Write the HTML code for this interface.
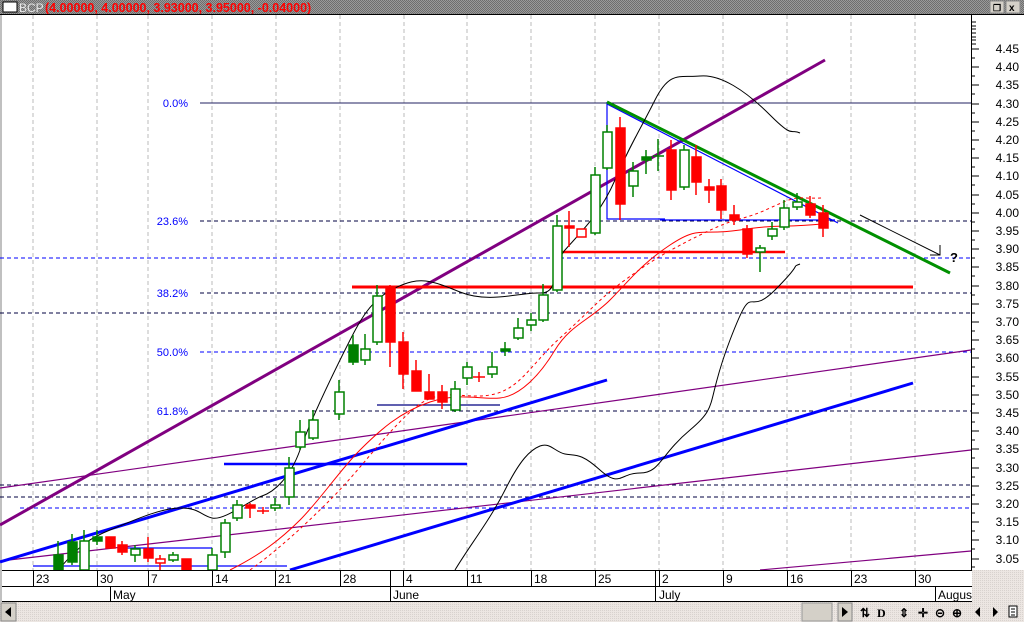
<!DOCTYPE html>
<html><head><meta charset="utf-8"><style>
html,body{margin:0;padding:0;width:1024px;height:622px;overflow:hidden;background:#fff;font-family:"Liberation Sans",sans-serif}
svg{display:block}
</style></head><body>
<svg width="1024" height="622" viewBox="0 0 1024 622" xmlns="http://www.w3.org/2000/svg" font-family="Liberation Sans, sans-serif">
<defs>
<pattern id="chk" width="2" height="2" patternUnits="userSpaceOnUse"><rect width="2" height="2" fill="#9a9a9a"/><rect width="1" height="1" fill="#6e6e6e"/><rect x="1" y="1" width="1" height="1" fill="#6e6e6e"/></pattern>
<pattern id="lt" width="2" height="2" patternUnits="userSpaceOnUse"><rect width="2" height="2" fill="#ece6e2"/><rect width="1" height="1" fill="#d8d2ce"/></pattern>
</defs>
<!-- top bar -->
<rect x="0" y="0" width="1024" height="14" fill="url(#chk)"/>
<rect x="3" y="2" width="14" height="10" fill="#fff" stroke="#000"/>
<text x="19" y="12" font-size="12" fill="#e8e8e8">BCP</text>
<text x="45" y="12" font-size="12.5" fill="#ff0000" font-weight="bold">(4.00000, 4.00000, 3.93000, 3.95000, -0.04000)</text>
<rect x="990" y="1" width="14" height="12" fill="#d4d0c8" stroke="#888"/><text x="993" y="11" font-size="9" font-weight="bold">&#x2750;</text>
<rect x="1006" y="1" width="14" height="12" fill="#d4d0c8" stroke="#888"/><text x="1009" y="11" font-size="10" font-weight="bold">x</text>
<line x1="0" y1="14.5" x2="1024" y2="14.5" stroke="#000"/>
<rect x="0" y="15" width="2" height="587" fill="#c0c0c0"/>
<!-- grid vertical -->
<g stroke="#bbb" stroke-dasharray="4,3">
<path d="M33 15V570M97 15V570M148 15V570M212 15V570M276 15V570M340 15V570M404 15V570M467 15V570M531 15V570M595 15V570M659 15V570M723 15V570M787 15V570M851 15V570M915 15V570"/>
</g>
<!-- fib / horizontal dashed -->
<line x1="200" y1="103" x2="971" y2="103" stroke="#202060" stroke-width="1"/>
<g stroke-dasharray="4,3" stroke-width="1">
<line x1="200" y1="221" x2="971" y2="221" stroke="#000040"/>
<line x1="0" y1="258" x2="971" y2="258" stroke="#0000ff"/>
<line x1="200" y1="293" x2="971" y2="293" stroke="#000040"/>
<line x1="0" y1="313" x2="971" y2="313" stroke="#000040"/>
<line x1="200" y1="352" x2="971" y2="352" stroke="#0000ff"/>
<line x1="200" y1="411" x2="971" y2="411" stroke="#000040"/>
<line x1="0" y1="485" x2="971" y2="485" stroke="#000040"/>
<line x1="0" y1="497" x2="971" y2="497" stroke="#000040"/>
<line x1="20" y1="508" x2="971" y2="508" stroke="#0000ff"/>
</g>
<g font-size="11" fill="#0000ff" text-anchor="end">
<text x="188" y="107">0.0%</text><text x="188" y="225">23.6%</text><text x="188" y="297">38.2%</text><text x="188" y="356">50.0%</text><text x="188" y="415">61.8%</text>
</g>
<!-- trend lines -->
<g fill="none">
<line x1="0" y1="488" x2="971" y2="350" stroke="#800080" stroke-width="1.2"/>
<line x1="0" y1="561" x2="971" y2="450" stroke="#800080" stroke-width="1.2"/>
<line x1="760" y1="570" x2="971" y2="551" stroke="#800080" stroke-width="1.2"/>
<line x1="0" y1="525" x2="825" y2="60" stroke="#800080" stroke-width="3"/>
<line x1="0" y1="562" x2="607" y2="380" stroke="#0000ff" stroke-width="3"/>
<line x1="290" y1="570" x2="913" y2="383" stroke="#0000ff" stroke-width="3"/>
<line x1="224" y1="464" x2="467" y2="464" stroke="#0000ff" stroke-width="2.5"/>
<line x1="33" y1="566" x2="287" y2="566" stroke="#0000ff" stroke-width="1.2"/>
<line x1="120" y1="548" x2="212" y2="548" stroke="#0000ff" stroke-width="1.2"/>
<line x1="377" y1="405" x2="500" y2="405" stroke="#000080" stroke-width="1.2"/>
<line x1="352" y1="287" x2="913" y2="287" stroke="#ff0000" stroke-width="3"/>
<line x1="555" y1="252" x2="785" y2="252" stroke="#ff0000" stroke-width="2.5"/>
<path d="M607 102V219H665M660 220H835" stroke="#0000ff" stroke-width="1.2"/>
<line x1="607" y1="104" x2="838" y2="223" stroke="#0000ff" stroke-width="1.2"/>
<line x1="607" y1="102" x2="950" y2="273" stroke="#009000" stroke-width="3"/>
<path d="M860 215L940 255M940 245V255H930" stroke="#000" stroke-width="1"/>
<!-- bands -->
<path d="M60 568C80 545 90 538 110 530S160 508 180 508 200 515 212 518 250 500 262 496 290 478 300 450 330 380 345 350 370 300 395 288 430 280 460 292 520 292 540 293 552 265 565 250 600 215 615 180 640 130 655 100 680 78 700 76 745 90 770 115 790 128 800 133 822 133" stroke="#000" stroke-width="1"/>
<path d="M455 570C470 545 490 520 505 490S530 450 540 446 555 452 565 454 580 452 600 470 620 473 640 473 660 455 690 430 705 405 730 340 745 320 775 290 790 268 800 264 822 264" stroke="#000" stroke-width="1"/>
<path d="M230 570C260 555 280 540 300 520S340 470 360 450 400 412 430 402 480 400 500 398 540 375 555 350 590 320 610 300 640 265 670 245 700 236 740 230 780 228 822 224" stroke="#ff0000" stroke-width="1"/>
<path d="M250 570C275 552 300 530 330 500S380 440 410 412 460 400 490 395 530 365 560 338 600 298 625 280 660 255 700 235 740 222 770 208 795 199 822 198" stroke="#ff0000" stroke-width="1" stroke-dasharray="3,3"/>
</g>
<!-- candles -->
<g stroke-width="1.5">
<g stroke="#008000">
<path d="M58 541V570M72 534V565M84 530V570M97 530V545M135 545V562M173 552V562M212 548V570M225 519V558M237 500V521M275 498V511M289 457V505M300 420V450M313 410V440M339 380V420M353 335V365M365 334V365M377 285V345M455 381V412M467 362V385M492 352V378M505 342V356M518 318V340M531 313V331M543 284V322M557 215V292M595 167V235M607 125V170M633 162V197M646 150V174M658 139V171M684 145V190M760 245V272M772 222V240M784 200V230M797 193V210"/>
<path d="M653 156H664" />
</g>
<g fill="#fff" stroke="#008000">
<rect x="80" y="541" width="9" height="29"/><rect x="131" y="549" width="9" height="6"/><rect x="169" y="555" width="9" height="5"/><rect x="208" y="555" width="9" height="15"/><rect x="221" y="523" width="9" height="29"/><rect x="233" y="505" width="9" height="13"/><rect x="271" y="505" width="9" height="3"/><rect x="285" y="468" width="9" height="29"/><rect x="296" y="432" width="9" height="15"/><rect x="309" y="420" width="9" height="18"/><rect x="335" y="392" width="9" height="22"/><rect x="361" y="349" width="9" height="11"/><rect x="373" y="296" width="9" height="46"/><rect x="451" y="389" width="9" height="21"/><rect x="463" y="367" width="9" height="11"/><rect x="488" y="367" width="9" height="7"/><rect x="514" y="328" width="9" height="10"/><rect x="527" y="320" width="9" height="5"/><rect x="539" y="295" width="9" height="25"/><rect x="553" y="226" width="9" height="64"/><rect x="591" y="175" width="9" height="58"/><rect x="603" y="132" width="9" height="36"/><rect x="629" y="171" width="9" height="15"/><rect x="680" y="150" width="9" height="37"/><rect x="756" y="248" width="9" height="4"/><rect x="768" y="229" width="9" height="7"/><rect x="780" y="208" width="9" height="19"/><rect x="793" y="202" width="9" height="5"/>
</g>
<g fill="#008000" stroke="#008000">
<rect x="54" y="555" width="9" height="15"/><rect x="68" y="542" width="9" height="20"/><rect x="93" y="537" width="9" height="4"/><rect x="349" y="345" width="9" height="17"/><rect x="501" y="349" width="9" height="2"/><rect x="642" y="157" width="9" height="3"/>
</g>
<g stroke="#ff0000">
<path d="M122 541V555M148 537V562M160 555V570M250 503V518M263 507V514M257 511H269M390 285V367M403 332V389M416 360V391M429 374V399M442 385V409M479 372V382M473 377H485M569 211V247M620 117V220M671 140V200M696 145V195M709 179V203M721 179V219M734 205V225M747 225V258M810 196V218M823 205V237"/>
</g>
<g fill="#ff0000" stroke="#ff0000">
<rect x="106" y="537" width="9" height="11"/><rect x="118" y="545" width="9" height="7"/><rect x="144" y="549" width="9" height="9"/><rect x="182" y="559" width="9" height="11"/><rect x="246" y="505" width="9" height="3"/><rect x="386" y="288" width="9" height="54"/><rect x="399" y="342" width="9" height="32"/><rect x="412" y="371" width="9" height="20"/><rect x="425" y="392" width="9" height="7"/><rect x="438" y="392" width="9" height="10"/><rect x="565" y="226" width="9" height="2"/><rect x="616" y="128" width="9" height="76"/><rect x="667" y="150" width="9" height="40"/><rect x="692" y="157" width="9" height="25"/><rect x="705" y="187" width="9" height="3"/><rect x="717" y="186" width="9" height="24"/><rect x="730" y="215" width="9" height="5"/><rect x="743" y="229" width="9" height="25"/><rect x="806" y="204" width="9" height="11"/><rect x="819" y="213" width="9" height="15"/>
</g>
<g fill="#fff" stroke="#ff0000"><rect x="156" y="559" width="9" height="4"/><rect x="577" y="229" width="9" height="8"/></g>
</g>
<text x="950" y="262" font-size="13" font-weight="bold">?</text>
<!-- right axis -->
<rect x="972" y="15" width="52" height="555" fill="#fff"/>
<line x1="971.5" y1="15" x2="971.5" y2="570" stroke="#000"/>
<g stroke="#000">
<path d="M971 22h5M971 26h5M971 29h5M971 33h5M971 37h5M971 40h5M971 44h5M971 29h5"/>
</g>
<g font-size="12" text-anchor="end" fill="#000">
<text x="1019" y="53">4.45</text><text x="1019" y="71">4.40</text><text x="1019" y="89">4.35</text><text x="1019" y="108">4.30</text><text x="1019" y="126">4.25</text><text x="1019" y="144">4.20</text><text x="1019" y="162">4.15</text><text x="1019" y="180">4.10</text><text x="1019" y="199">4.05</text><text x="1019" y="217">4.00</text><text x="1019" y="235">3.95</text><text x="1019" y="253">3.90</text><text x="1019" y="271">3.85</text><text x="1019" y="290">3.80</text><text x="1019" y="308">3.75</text><text x="1019" y="326">3.70</text><text x="1019" y="344">3.65</text><text x="1019" y="362">3.60</text><text x="1019" y="381">3.55</text><text x="1019" y="399">3.50</text><text x="1019" y="417">3.45</text><text x="1019" y="435">3.40</text><text x="1019" y="453">3.35</text><text x="1019" y="472">3.30</text><text x="1019" y="490">3.25</text><text x="1019" y="508">3.20</text><text x="1019" y="526">3.15</text><text x="1019" y="544">3.10</text><text x="1019" y="563">3.05</text>
</g>
<path stroke="#000" d="M971 49h8M971 67h8M971 85h8M971 104h8M971 122h8M971 140h8M971 158h8M971 176h8M971 195h8M971 213h8M971 231h8M971 249h8M971 267h8M971 286h8M971 304h8M971 322h8M971 340h8M971 358h8M971 377h8M971 395h8M971 413h8M971 431h8M971 449h8M971 468h8M971 486h8M971 504h8M971 522h8M971 540h8M971 559h8M971 58h4M971 76h4M971 94h4M971 113h4M971 131h4M971 149h4M971 167h4M971 185h4M971 204h4M971 222h4M971 240h4M971 258h4M971 276h4M971 295h4M971 313h4M971 331h4M971 349h4M971 367h4M971 386h4M971 404h4M971 422h4M971 440h4M971 458h4M971 477h4M971 495h4M971 513h4M971 531h4M971 549h4M971 567h4"/>
<!-- date axis -->
<rect x="2" y="570" width="970" height="32" fill="#fff"/>
<path stroke="#000" d="M2 570.5H972M2 586.5H972M2 601.5H972M33.5 570V586M97.5 570V586M148.5 570V586M212.5 570V586M275.5 570V586M340.5 570V586M390.5 570V602M403.5 570V586M467.5 570V586M531.5 570V586M595.5 570V586M655.5 570V602M659.5 570V586M723.5 570V586M787.5 570V586M851.5 570V586M915.5 570V586M935.5 586V602M110.5 586V602"/>
<g font-size="12" fill="#000">
<text x="36" y="583">23</text><text x="100" y="583">30</text><text x="151" y="583">7</text><text x="215" y="583">14</text><text x="278" y="583">21</text><text x="343" y="583">28</text><text x="406" y="583">4</text><text x="470" y="583">11</text><text x="534" y="583">18</text><text x="598" y="583">25</text><text x="662" y="583">2</text><text x="726" y="583">9</text><text x="790" y="583">16</text><text x="854" y="583">23</text><text x="918" y="583">30</text>
<text x="113" y="599">May</text><text x="393" y="599">June</text><text x="659" y="599">July</text><text x="938" y="599">Augus</text>
</g>
<rect x="972" y="570" width="52" height="32" fill="url(#lt)"/>
<!-- scrollbar -->
<rect x="0" y="602" width="1024" height="20" fill="url(#lt)"/>
<rect x="1" y="603" width="15" height="18" fill="#d4d0c8" stroke="#888"/>
<path d="M11 607L5 612L11 617Z" fill="#000"/>
<rect x="802" y="603" width="30" height="18" fill="#d4d0c8" stroke="#999"/>
<rect x="838" y="603" width="14" height="18" fill="#d4d0c8" stroke="#888"/>
<path d="M842 607L848 612L842 617Z" fill="#000"/>
<g font-size="12" font-weight="bold" fill="#000">
<text x="860" y="617">&#x21C5;</text><text x="877" y="617" font-family="Liberation Serif">D</text><text x="899" y="617">&#x21D5;</text><text x="918" y="617">&#x271B;</text><text x="935" y="617">&#x229D;</text><text x="952" y="617">&#x2295;</text>
</g>
<path d="M980 607L975 612L980 617Z M993 607L998 612L993 617Z" fill="#000"/>
<rect x="1009" y="606" width="8" height="11" fill="#fff" stroke="#000"/><path d="M1011 609h4M1011 612h4M1011 615h4" stroke="#000"/>
</svg>
</body></html>
